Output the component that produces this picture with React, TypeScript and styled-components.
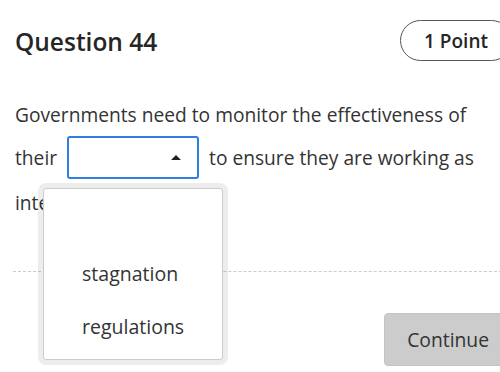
import React from "react";
import styled, { createGlobalStyle } from "styled-components";

const GlobalStyle = createGlobalStyle`
  html, body {
    margin: 0;
    padding: 0;
    background: #fff;
    overflow: hidden;
  }
  body {
    font-family: "Open Sans", "Noto Sans", sans-serif;
    color: #333;
  }
`;

const OPTIONS = ["", "stagnation", "regulations"];

const App = () => {
  return (
    <>
      <GlobalStyle />
      <Page>
        <Header>
          <Title>Question 44</Title>
          <PointBadge>1 Point</PointBadge>
        </Header>

        <Prompt>
          Governments need to monitor the effectiveness of their{" "}
          <SelectWrap>
            <SelectBox>
              <Caret />
            </SelectBox>
            <Menu>
              <MenuInner>
                {OPTIONS.map((opt, i) => (
                  <MenuOption key={i}>{opt}</MenuOption>
                ))}
              </MenuInner>
            </Menu>
          </SelectWrap>{" "}
          to ensure they are working as intended.
        </Prompt>

        <Divider />

        <Footer>
          <ContinueButton>Continue</ContinueButton>
        </Footer>
      </Page>
    </>
  );
};

export default App;

const Page = styled.div`
  width: 497px;
  padding: 20px 15px 0;
`;

const Header = styled.div`
  display: flex;
  justify-content: space-between;
  align-items: center;
`;

const Title = styled.h1`
  margin: 0;
  font-size: 24.5px;
  line-height: 32px;
  font-weight: 600;
  color: #262626;
  padding-top: 2px;
`;

const PointBadge = styled.div`
  display: flex;
  align-items: center;
  height: 39px;
  padding: 0 23px;
  border: 1px solid #555;
  border-radius: 21px;
  font-size: 19px;
  font-weight: 600;
  color: #262626;
`;

const Prompt = styled.p`
  margin: 32px 0 0;
  font-size: 19.2px;
  line-height: 43px;
  color: #333;
  height: 129px;
`;

const SelectWrap = styled.span`
  position: relative;
  top: -2px;
  display: inline-block;
  vertical-align: middle;
  margin: 0 5px 0 5px;
  line-height: 0;
`;

const SelectBox = styled.span`
  display: inline-flex;
  align-items: center;
  justify-content: flex-end;
  box-sizing: border-box;
  width: 132px;
  height: 43px;
  padding-right: 16px;
  border: 2px solid #2f7fe0;
  border-radius: 3px;
  background: #fff;
`;

const Caret = styled.span`
  width: 0;
  height: 0;
  border-left: 5px solid transparent;
  border-right: 5px solid transparent;
  border-bottom: 5px solid #222;
`;

const Menu = styled.span`
  position: absolute;
  z-index: 2;
  left: -29px;
  top: 47px;
  box-sizing: border-box;
  width: 190px;
  height: 182px;
  padding: 5px;
  background: rgba(0, 0, 0, 0.07);
  border-radius: 8px;
`;

const MenuInner = styled.span`
  display: flex;
  flex-direction: column;
  box-sizing: border-box;
  height: 100%;
  padding-top: 5px;
  background: #fff;
  border: 1px solid #ccc;
  border-radius: 3px;
`;

const MenuOption = styled.span`
  display: flex;
  align-items: center;
  height: 53px;
  padding-left: 38px;
  font-size: 19.5px;
  line-height: 27px;
  color: #333;
`;

const Divider = styled.div`
  margin-top: 49px;
  margin-left: -2px;
  border-top: 1px dashed #ccc;
`;

const Footer = styled.div`
  display: flex;
  justify-content: flex-end;
  margin-top: 41px;
`;

const ContinueButton = styled.button`
  height: 53px;
  padding: 0 22px;
  border: 1px solid #c4c4c4;
  border-radius: 4px;
  background: #ccc;
  font-family: "Open Sans", "Noto Sans", sans-serif;
  font-size: 19.3px;
  color: #333;
`;
